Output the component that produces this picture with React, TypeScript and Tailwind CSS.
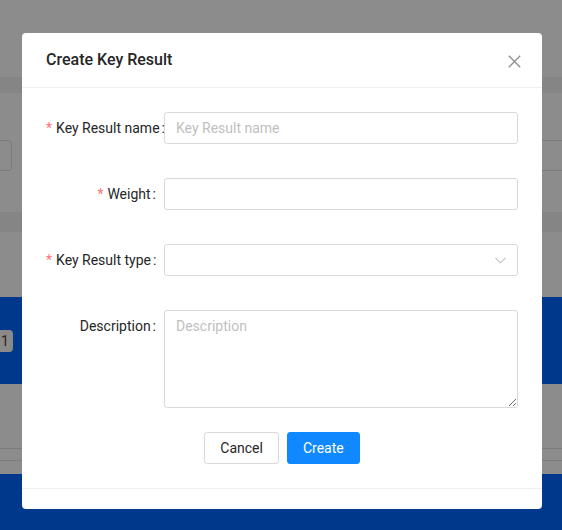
import { ReactNode } from "react";

interface FieldProps {
  label: string;
  required?: boolean;
  children: ReactNode;
  last?: boolean;
}

function Field({ label, required, children, last }: FieldProps) {
  return (
    <div className={`flex items-start ${last ? "mb-6" : "mb-[34px]"}`}>
      <div className="h-8 w-[118px] shrink-0 overflow-hidden whitespace-nowrap text-right text-[14px] leading-[32px] text-[#262626]">
        {required && <span className="mr-1 text-[#ff7272]">*</span>}
        {label}
        <span className="ml-[2px] mr-2">:</span>
      </div>
      <div className="min-w-0 flex-1">{children}</div>
    </div>
  );
}

function ChevronDown() {
  return (
    <svg width="11" height="7" viewBox="0 0 11 7" fill="none">
      <path d="M0.5 0.8 L5.5 5.8 L10.5 0.8" stroke="#bfbfbf" strokeWidth="1.1" />
    </svg>
  );
}

function CloseIcon() {
  return (
    <svg width="13" height="13" viewBox="0 0 13 13" fill="none">
      <path d="M0.8 0.8 L12.2 12.2 M12.2 0.8 L0.8 12.2" stroke="#8c8c8c" strokeWidth="1.3" />
    </svg>
  );
}

function Backdrop() {
  return (
    <div className="flex h-full flex-col">
      <div className="h-[77px]" />
      <div className="h-[16px] bg-[#858585]" />
      <div className="h-[47px]" />
      <div className="flex h-[31px] items-stretch justify-between">
        <div className="ml-[-100px] w-[112px] rounded-[4px] border border-[#7b7b7b]" />
        <div className="w-[20px] border-y border-[#7b7b7b]" />
      </div>
      <div className="h-[41px]" />
      <div className="h-[20px] bg-[#858585]" />
      <div className="h-[65px]" />
      <div className="flex h-[87px] items-center bg-[#00398c]">
        <span className="ml-[-3px] rounded-[4px] bg-[#8a8a8a] px-[4px] text-[14px] leading-[22px] text-[#2e2410]">
          1
        </span>
      </div>
      <div className="h-[64px]" />
      <div className="h-[12px] border-t border-[#7b7b7b]" />
      <div className="h-[14px] border-t border-[#7b7b7b]" />
      <div className="flex-1 bg-[#00398c]" />
    </div>
  );
}

export default function App() {
  return (
    <div
      className="relative h-[530px] w-[562px] overflow-hidden bg-[#8c8c8c]"
      style={{ fontFamily: "Roboto, 'Liberation Sans', sans-serif" }}
    >
      <Backdrop />

      <div className="absolute left-[22px] top-[33px] w-[520px] rounded-[4px] bg-white">
        <div className="relative border-b border-[#f0f0f0] px-6 py-4">
          <h2 className="text-[16px] font-medium leading-[22px] text-[#262626]">
            Create Key Result
          </h2>
          <button className="absolute right-0 top-0 flex h-14 w-14 items-center justify-center">
            <CloseIcon />
          </button>
        </div>

        <form className="p-6" onSubmit={(e) => e.preventDefault()}>
          <Field label="Key Result name" required>
            <input
              type="text"
              placeholder="Key Result name"
              className="h-8 w-full rounded-[3px] border border-[#d9d9d9] px-[11px] text-[14px] text-[#262626] outline-none placeholder:text-[#bfbfbf]"
            />
          </Field>

          <Field label="Weight" required>
            <input
              type="text"
              className="h-8 w-full rounded-[3px] border border-[#d9d9d9] px-[11px] text-[14px] text-[#262626] outline-none"
            />
          </Field>

          <Field label="Key Result type" required>
            <div className="flex h-8 w-full items-center justify-end rounded-[3px] border border-[#d9d9d9] pr-[11px]">
              <ChevronDown />
            </div>
          </Field>

          <Field label="Description" last>
            <textarea
              placeholder="Description"
              className="block h-[98px] w-full resize-y rounded-[3px] border border-[#d9d9d9] px-[11px] py-1 text-[14px] leading-[22px] text-[#262626] outline-none placeholder:text-[#bfbfbf]"
            />
          </Field>

          <div className="flex justify-center gap-2">
            <button
              type="button"
              className="h-8 rounded-[3px] border border-[#d9d9d9] bg-white px-[15px] text-[14px] text-[#262626]"
            >
              Cancel
            </button>
            <button
              type="submit"
              className="h-8 rounded-[3px] border border-[#1088ff] bg-[#1088ff] px-[15px] text-[14px] text-white"
            >
              Create
            </button>
          </div>
        </form>

        <div className="h-[21px] border-t border-[#f0f0f0]" />
      </div>
    </div>
  );
}
